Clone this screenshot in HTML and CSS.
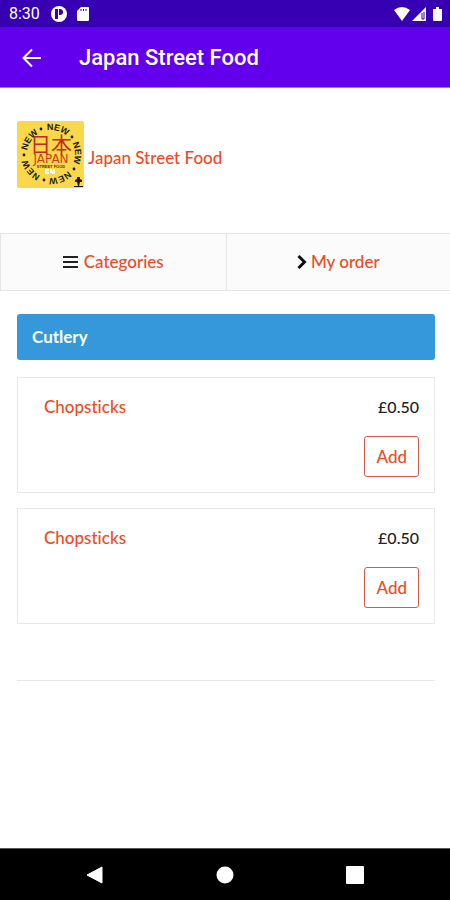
FILE: index.html
```
<!DOCTYPE html>
<html lang="en">
<head>
<meta charset="utf-8">
<meta name="viewport" content="width=device-width, initial-scale=1">
<title>Japan Street Food</title>
<link rel="stylesheet" href="styles.css">
</head>
<body>
<div class="status">
  <span class="time">8:30</span>
  <svg class="status-app" width="16" height="16" viewBox="0 0 16 16"><circle cx="8" cy="8" r="8" fill="#fff"/><path d="M4 3h3v10H4zM8 3h1a3 3 0 0 1 0 6H8z" fill="#3700b3"/></svg>
  <svg class="status-card" width="12" height="16" viewBox="0 0 12 16"><path d="M4 1h7a1 1 0 0 1 1 1v12a1 1 0 0 1-1 1H1a1 1 0 0 1-1-1V5z" fill="#fff"/><path d="M4 3v2M6.500 3v2M9 3v2" stroke="#3700b3"/></svg>
  <svg class="status-right" width="48" height="16" viewBox="0 0 48 16"><path d="M0 4Q8-2 16 4L8 15z" fill="#fff"/><path d="M18 15 32 1v14z" fill="#fff"/><path d="M28 7v6h2V6" fill="none" stroke="#3700b3"/><path d="M39 3h3V1h3v2h3v11a1 1 0 0 1-1 1h-7a1 1 0 0 1-1-1z" fill="#fff"/></svg>
</div>
<header class="appbar">
  <button class="back" aria-label="Back"><svg width="20" height="20" viewBox="0 0 20 20" fill="none" stroke="#fff" stroke-width="2"><path d="M19 10H2M10 1.500 1.500 10 10 18.500"/></svg></button>
  <h1>Japan Street Food</h1>
</header>
<main>
  <a class="shop" href="#">
    <svg class="logo" width="67" height="67" viewBox="0 0 67 67" aria-hidden="true">
      <rect width="67" height="67" rx="2" fill="#fbd84b"/>
      <path id="ring" d="M10 33A24 24 0 0 1 58 33A24 24 0 0 1 10 33" fill="none"/>
      <g class="ring">
        <text><textPath href="#ring" startOffset="14">NEW</textPath></text>
        <text><textPath href="#ring" startOffset="44">NEW</textPath></text>
        <text><textPath href="#ring" startOffset="74">NEW</textPath></text>
        <text><textPath href="#ring" startOffset="104">NEW</textPath></text>
        <text><textPath href="#ring" startOffset="134">NEW</textPath></text>
      </g>
      <g fill="#211c10"><circle cx="55" cy="16" r="1.400"/><circle cx="57" cy="48" r="1.400"/><circle cx="27" cy="59" r="1.400"/><circle cx="7" cy="34" r="1.400"/><circle cx="24" cy="8" r="1.400"/></g>
      <text class="kanji" x="34" y="31">日本</text>
      <text class="wordmark" x="34" y="42">JAPAN</text>
      <text class="tagline" x="34" y="47">STREET FOOD</text>
      <path d="M28 48h4v2h-2v1h2v2h-4zM33 48h2v2h1v-2h2v5h-3v-1h-2z" fill="#fffdf0"/>
      <path d="M60 56h3v2l2 1v2h-2l-1 4h-1l-1-4h-2v-2l2-1zM57 65h9v1h-9z" fill="#211c10"/>
    </svg>
    <span>Japan Street Food</span>
  </a>
  <nav class="tabs">
    <a href="#"><svg width="15" height="14" viewBox="0 0 15 14"><path d="M0 2h15M0 7h15M0 12h15" stroke="#222" stroke-width="2"/></svg>Categories</a>
    <a class="order" href="#"><svg width="10" height="14" viewBox="0 0 10 14"><path d="M1.500 1 7.500 7l-6 6" fill="none" stroke="#111" stroke-width="3"/></svg>My order</a>
  </nav>
  <section class="menu">
    <h2>Cutlery</h2>
    <article class="item"><a href="#">Chopsticks</a><div class="buy"><span>£0.50</span><button>Add</button></div></article>
    <article class="item"><a href="#">Chopsticks</a><div class="buy"><span>£0.50</span><button>Add</button></div></article>
    <hr>
  </section>
</main>
<footer class="sysnav">
  <button aria-label="Back"><svg width="18" height="18" viewBox="0 0 18 18"><path d="M16 1v16L1 9z" fill="#fff" stroke="#fff" stroke-linejoin="round"/></svg></button>
  <button aria-label="Home"><svg width="18" height="18" viewBox="0 0 18 18"><circle cx="9" cy="9" r="8.500" fill="#fff"/></svg></button>
  <button aria-label="Recent apps"><svg width="18" height="18" viewBox="0 0 18 18"><rect width="18" height="18" rx="1" fill="#fff"/></svg></button>
</footer>
</body>
</html>
```
FILE: styles.css
```
* { box-sizing: border-box; }
body {
  margin: 0;
  min-height: 100vh;
  display: flex;
  flex-direction: column;
  background: #fff;
  color: #222;
  font: 500 17px/24px Lato, sans-serif;
  font-variant-ligatures: none;
}
svg { display: block; flex: none; }
a { color: #f04a24; text-decoration: none; }
button { font: inherit; cursor: pointer; }
.status {
  height: 27px;
  display: flex;
  align-items: center;
  padding: 0 8px 0 9px;
  background: #3700b3;
  color: #fff;
  font: 400 16px/28px Roboto, sans-serif;
}
.status-app { margin-left: 11px; }
.status-card { margin-left: 10px; }
.status-right { margin-left: auto; }
.appbar {
  height: 61px;
  display: flex;
  align-items: center;
  gap: 37px;
  padding: 2px 22px 0;
  background: #6200ee;
  border-bottom: 1px solid #a678f0;
  color: #fff;
}
.back { padding: 0; border: 0; background: none; }
.appbar h1 { margin: 0; font: 500 22px/28px Roboto, sans-serif; }
main { flex: 1; }
.shop {
  display: flex;
  align-items: center;
  gap: 4px;
  padding: 33px 17px 45px;
}
.shop span { padding-top: 6px; }
.ring { font: 700 9px "Liberation Sans", sans-serif; fill: #211c10; text-anchor: middle; }
.kanji { font: 400 21px "Noto Sans CJK JP", sans-serif; fill: #c52b13; text-anchor: middle; }
.wordmark { font: 400 12px "DejaVu Sans", sans-serif; fill: #cf3d18; text-anchor: middle; }
.tagline { font: 700 4px "Liberation Sans", sans-serif; fill: #4a3216; text-anchor: middle; }
.tabs {
  display: grid;
  grid-template-columns: 1fr 1fr;
  border: 1px solid #e5e5e5;
  border-right: 0;
  background: #fbfbfb;
}
.tabs a {
  height: 56px;
  display: flex;
  align-items: center;
  justify-content: center;
  gap: 6px;
}
.tabs .order { gap: 4px; border-left: 1px solid #e5e5e5; }
.menu { padding: 23px 15px 0 17px; }
.menu h2 {
  margin: 0 0 17px;
  padding: 11px 15px;
  border-radius: 3px;
  background: #3498db;
  color: #fff;
  font: 700 17px/24px Lato, sans-serif;
}
.item {
  display: flex;
  justify-content: space-between;
  min-height: 116px;
  margin-bottom: 15px;
  padding: 17px 15px 15px 26px;
  border: 1px solid #e8e8e8;
}
.buy { display: flex; flex-direction: column; align-items: flex-end; gap: 17px; }
.buy span { font-size: 16px; }
.buy button {
  height: 41px;
  padding: 0 11px;
  border: 1px solid #d4584b;
  border-radius: 3px;
  background: #fff;
  color: #f04a24;
}
.menu hr { margin: 56px 0 0; border: 0; border-top: 1px solid #e8e8e8; }
.sysnav {
  height: 52px;
  display: grid;
  grid-template-columns: repeat(3, 130px);
  justify-content: center;
  background: #000;
  border-top: 1px solid #555;
}
.sysnav button {
  display: flex;
  align-items: center;
  justify-content: center;
  padding: 0;
  border: 0;
  background: none;
}
```
